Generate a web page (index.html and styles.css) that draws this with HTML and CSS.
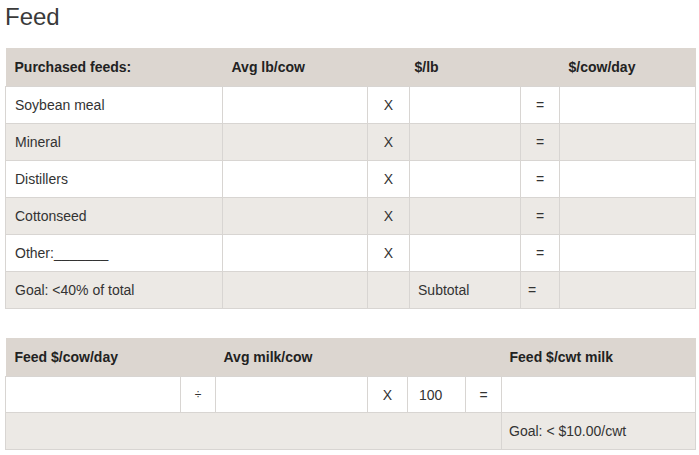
FILE: index.html
```html
<!DOCTYPE html>
<html>
<head>
<meta charset="utf-8">
<link rel="stylesheet" href="styles.css">
</head>
<body>
<div class="page">
  <h1 class="title">Feed</h1>
  <table class="calc">
    <colgroup>
      <col style="width:217px"><col style="width:145px"><col style="width:42px"><col style="width:111px"><col style="width:39px"><col style="width:136px">
    </colgroup>
    <thead>
      <tr>
        <th>Purchased feeds:</th>
        <th colspan="2">Avg lb/cow</th>
        <th colspan="2" class="p5">$/lb</th>
        <th class="p9">$/cow/day</th>
      </tr>
    </thead>
    <tbody>
      <tr><td>Soybean meal</td><td></td><td class="op">X</td><td></td><td class="op">=</td><td></td></tr>
      <tr class="alt"><td>Mineral</td><td></td><td class="op">X</td><td></td><td class="op">=</td><td></td></tr>
      <tr><td>Distillers</td><td></td><td class="op">X</td><td></td><td class="op">=</td><td></td></tr>
      <tr class="alt"><td>Cottonseed</td><td></td><td class="op">X</td><td></td><td class="op">=</td><td></td></tr>
      <tr><td>Other:_______</td><td></td><td class="op">X</td><td></td><td class="op">=</td><td></td></tr>
      <tr class="alt"><td>Goal: &lt;40% of total</td><td></td><td></td><td class="p8">Subtotal</td><td class="p7">=</td><td></td></tr>
    </tbody>
  </table>

  <table class="calc second">
    <colgroup>
      <col style="width:175px"><col style="width:35px"><col style="width:152px"><col style="width:40px"><col style="width:58px"><col style="width:36px"><col style="width:194px">
    </colgroup>
    <thead>
      <tr>
        <th colspan="2">Feed $/cow/day</th>
        <th colspan="4" class="p8">Avg milk/cow</th>
        <th class="p8">Feed $/cwt milk</th>
      </tr>
    </thead>
    <tbody>
      <tr class="short"><td></td><td class="op small">÷</td><td></td><td class="op">X</td><td class="p11">100</td><td class="op">=</td><td></td></tr>
      <tr class="alt"><td colspan="6"></td><td class="p7">Goal: &lt; $10.00/cwt</td></tr>
    </tbody>
  </table>
</div>
</body>
</html>
```

FILE: styles.css
```css
html, body {
  margin: 0;
  padding: 0;
  background: #ffffff;
}

.page {
  padding: 3px 4px 0 5px;
  font-family: "Liberation Sans", Arial, sans-serif;
  color: #333333;
}

.title {
  margin: 0 0 18px 0;
  font-size: 24px;
  font-weight: normal;
  line-height: 27px;
  color: #3a3a3a;
}

.calc {
  width: 690px;
  border-collapse: collapse;
  table-layout: fixed;
  font-size: 14px;
}

.second {
  margin-top: 29px;
}

.calc th {
  background: #dcd6d0;
  height: 38px;
  padding: 0 0 0 9px;
  text-align: left;
  font-weight: bold;
  color: #222222;
  vertical-align: middle;
}

.calc td {
  height: 36px;
  padding: 0 0 0 9px;
  border: 1px solid #d8d5d2;
  background: #ffffff;
  vertical-align: middle;
  color: #333333;
}

.calc tr.short td {
  height: 35px;
}

.calc tr.alt td {
  background: #ece9e5;
}

.calc td.op {
  text-align: center;
  padding: 0;
}

.calc td.small {
  font-size: 12px;
}

.calc .p5 { padding-left: 5px; }
.calc .p7 { padding-left: 7px; }
.calc .p8 { padding-left: 8px; }
.calc .p9 { padding-left: 9px; }
.calc .p11 { padding-left: 11px; }
```
